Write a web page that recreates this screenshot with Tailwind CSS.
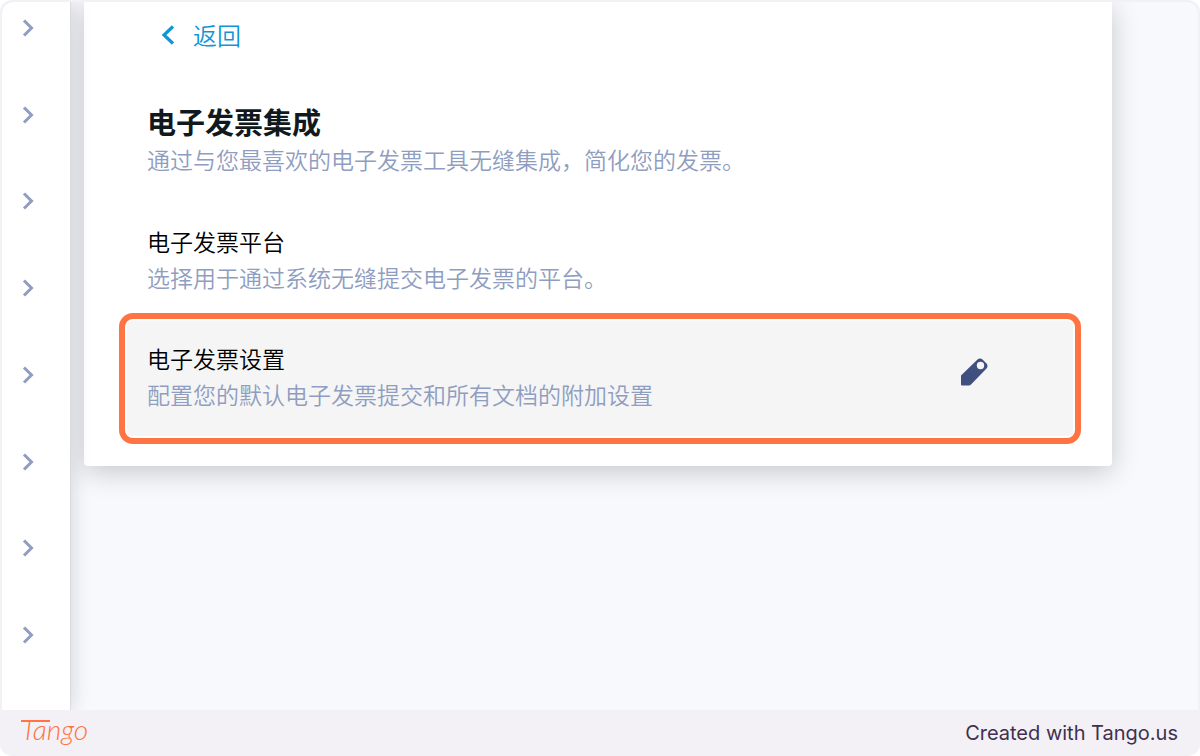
<!DOCTYPE html>
<html lang="zh-CN">
  <head>
    <meta charset="UTF-8" />
    <meta name="viewport" content="width=device-width, initial-scale=1.0" />
    <title>电子发票集成</title>
    <script src="https://cdn.jsdelivr.net/npm/@tailwindcss/browser@4"></script>
  </head>
  <body class="bg-white font-['Noto_Sans_CJK_SC',sans-serif]">
    <div class="min-h-screen flex flex-col bg-[#f3f1f6] rounded-xl overflow-hidden">
      <div class="flex-1 flex mx-[2px] mt-[2px] rounded-t-xl overflow-hidden bg-[#f8f9fd]">
        <nav class="relative z-10 w-[69px] shrink-0 bg-white border-r border-[#dcdcde] shadow-[0_0_20px_rgba(0,0,0,0.16)]">
          <ul class="h-full flex flex-col justify-between items-start pl-4 pt-4 pb-[65px] text-[#8f9dc0]">
            <li><button class="block" aria-label="展开 1"><svg class="w-5 h-5" viewBox="0 0 20 20" fill="none" stroke="currentColor" stroke-width="3"><path d="M6 2.500l7.500 7.500L6 17.500" /></svg></button></li>
            <li><button class="block" aria-label="展开 2"><svg class="w-5 h-5" viewBox="0 0 20 20" fill="none" stroke="currentColor" stroke-width="3"><path d="M6 2.500l7.500 7.500L6 17.500" /></svg></button></li>
            <li><button class="block" aria-label="展开 3"><svg class="w-5 h-5" viewBox="0 0 20 20" fill="none" stroke="currentColor" stroke-width="3"><path d="M6 2.500l7.500 7.500L6 17.500" /></svg></button></li>
            <li><button class="block" aria-label="展开 4"><svg class="w-5 h-5" viewBox="0 0 20 20" fill="none" stroke="currentColor" stroke-width="3"><path d="M6 2.500l7.500 7.500L6 17.500" /></svg></button></li>
            <li><button class="block" aria-label="展开 5"><svg class="w-5 h-5" viewBox="0 0 20 20" fill="none" stroke="currentColor" stroke-width="3"><path d="M6 2.500l7.500 7.500L6 17.500" /></svg></button></li>
            <li><button class="block" aria-label="展开 6"><svg class="w-5 h-5" viewBox="0 0 20 20" fill="none" stroke="currentColor" stroke-width="3"><path d="M6 2.500l7.500 7.500L6 17.500" /></svg></button></li>
            <li><button class="block" aria-label="展开 7"><svg class="w-5 h-5" viewBox="0 0 20 20" fill="none" stroke="currentColor" stroke-width="3"><path d="M6 2.500l7.500 7.500L6 17.500" /></svg></button></li>
            <li><button class="block" aria-label="展开 8"><svg class="w-5 h-5" viewBox="0 0 20 20" fill="none" stroke="currentColor" stroke-width="3"><path d="M6 2.500l7.500 7.500L6 17.500" /></svg></button></li>
          </ul>
        </nav>

        <main class="flex-1 pl-[13px] pr-[86px]">
          <section class="bg-white rounded-b pt-[15px] pb-[22px] pl-[35px] pr-[31px] shadow-[0_6px_28px_rgba(0,0,0,0.2)]">
            <a href="#" class="ml-[42px] inline-flex items-center gap-[18px] text-2xl leading-9 font-[350] text-[#0f96d8]">
              <svg class="w-[14px] h-5" viewBox="0 0 14 20" fill="none" stroke="currentColor" stroke-width="3.2"><path d="M12 1.5L3 10l9 8.5" /></svg>
              返回
            </a>

            <header class="ml-7 mt-12">
              <h1 class="text-[29px] leading-10 font-bold text-[#12191c]">电子发票集成</h1>
              <p class="text-[23px] leading-9 font-[350] text-[#8f9dc0]">通过与您最喜欢的电子发票工具无缝集成，简化您的发票。</p>
            </header>

            <div class="ml-7 mt-[46px]">
              <h2 class="text-[23px] leading-9 font-[350] text-black">电子发票平台</h2>
              <p class="text-[23px] leading-9 font-[350] text-[#8f9dc0]">选择用于通过系统无缝提交电子发票的平台。</p>
            </div>

            <div class="mt-[18px] border-6 border-[#ff7442] rounded-[14px] p-[2px] bg-white">
              <div class="flex items-center justify-between rounded bg-[#f5f5f5] pl-5 pr-[85px] pt-[19px] pb-6">
                <div>
                  <h2 class="text-[23px] leading-9 font-[350] text-black">电子发票设置</h2>
                  <p class="text-[23px] leading-9 font-[350] text-[#8f9dc0]">配置您的默认电子发票提交和所有文档的附加设置</p>
                </div>
                <button class="text-[#3f4f80] pb-2" aria-label="编辑">
                  <svg class="w-7 h-7" viewBox="0 0 28 28" fill="currentColor" fill-rule="evenodd"><path d="M1 17.500L17.500 1.500q2.500-2 5 0l4 4q2 2.500 0 5L11 26.500q-1 1-2 1H2q-1 0-1-1zM16.800 7.500a3.700 3.700 0 1 0 7.400 0a3.700 3.700 0 1 0-7.400 0z" /></svg>
                </button>
              </div>
            </div>
          </section>
        </main>
      </div>

      <footer class="h-[46px] flex items-center justify-between pl-5 pr-[22px]">
        <a href="#" aria-label="Tango">
          <svg class="w-20 h-10 overflow-visible" viewBox="0 0 80 40" fill="#ff7442">
            <path d="M1 8H30" stroke="#ff7442" stroke-width="2" />
            <text x="1" y="27" class="font-['Lato',sans-serif] text-[28px] font-light italic">Tango</text>
          </svg>
        </a>
        <a href="#" class="font-['Inter',sans-serif] text-xl leading-7 text-[#40304f]">Created with Tango.us</a>
      </footer>
    </div>
  </body>
</html>
